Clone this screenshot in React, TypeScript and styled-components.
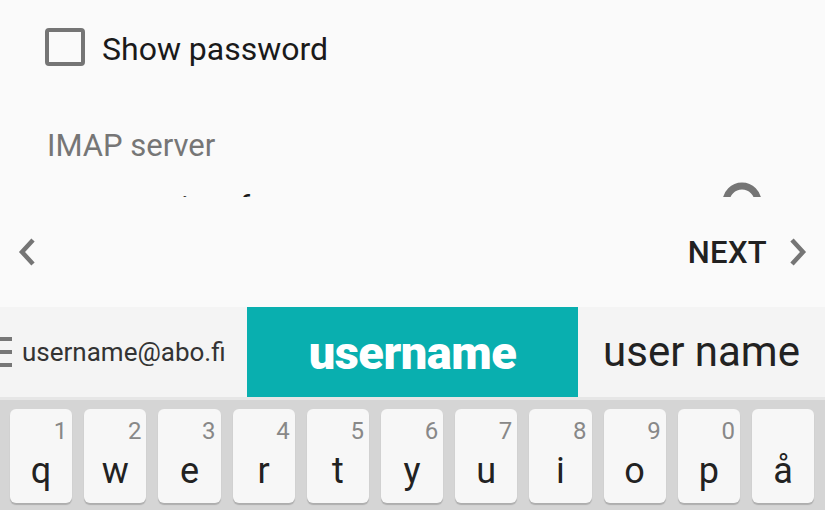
import React from 'react';
import styled, { createGlobalStyle } from 'styled-components';

const GlobalStyle = createGlobalStyle`
  html, body {
    margin: 0;
    padding: 0;
    background: #fafafa;
    font-family: Roboto, "Noto Sans", Arial, sans-serif;
  }
  * { box-sizing: border-box; }
`;

export const Screen = styled.div`
  width: 825px;
  height: 510px;
  overflow: hidden;
  display: flex;
  flex-direction: column;
  background: #fafafa;
`;

export const Form = styled.section`
  height: 197px;
  overflow: hidden;
  padding: 28px 0 0 45px;
  display: flex;
  flex-direction: column;
  flex-shrink: 0;
`;

export const CheckRow = styled.label`
  display: flex;
  align-items: center;
  gap: 17px;
  height: 39px;
`;

export const Box = styled.span`
  width: 40px;
  height: 38px;
  border: 4px solid #757575;
  border-radius: 4px;
`;

export const CheckText = styled.span`
  font-size: 32px;
  color: #1a1a1a;
  line-height: 1;
  margin-top: 4px;
`;

export const FieldLabel = styled.div`
  margin-top: 64px;
  margin-left: 2px;
  font-size: 31px;
  line-height: 1;
  color: #767676;
`;

export const FieldRow = styled.div`
  display: flex;
  align-items: flex-start;
  margin-top: 18px;
  margin-left: 2px;
  padding-right: 63px;
`;

export const FieldValue = styled.span`
  flex: 1;
  padding-top: 13px;
  font-size: 31px;
  line-height: 1;
  color: #1a1a1a;
`;

export const ClearIcon = styled.svg`
  margin-top: 3px;
`;

export const NavBar = styled.nav`
  height: 110px;
  flex-shrink: 0;
  display: flex;
  align-items: center;
  justify-content: space-between;
  padding: 0 18px 0 18px;
`;

export const NextButton = styled.span`
  display: flex;
  align-items: center;
  gap: 22px;
  font-size: 31px;
  font-weight: 500;
  color: #212121;
  letter-spacing: 0.3px;
`;

export const Strip = styled.div`
  height: 90px;
  flex-shrink: 0;
  display: flex;
  background: #f4f4f4;
`;

export const Suggestion = styled.div<{ $active?: boolean; $w: number }>`
  width: ${p => p.$w}px;
  display: flex;
  align-items: center;
  justify-content: center;
  background: ${p => (p.$active ? '#09afaf' : 'transparent')};
  color: ${p => (p.$active ? '#ffffff' : '#222')};
`;

export const LeftSuggestion = styled(Suggestion)`
  justify-content: flex-start;
  gap: 10px;
  font-size: 26px;
  color: #333;
`;

export const Bars = styled.span`
  width: 12px;
  height: 30px;
  display: flex;
  flex-direction: column;
  justify-content: space-between;
  & > i {
    display: block;
    height: 4px;
    background: #777;
  }
`;

export const BigWord = styled.span<{ $bold?: boolean }>`
  font-size: ${p => (p.$bold ? 47 : 42)}px;
  font-weight: ${p => (p.$bold ? 900 : 400)};
  letter-spacing: ${p => (p.$bold ? '-0.5px' : '0')};
  line-height: 1;
`;

export const Keyboard = styled.div`
  flex: 1;
  background: #d5d5d5;
  border-top: 3px solid #e6e6e6;
  padding: 9px 11px 0 10px;
  display: flex;
  gap: 12px;
`;

export const Key = styled.div`
  flex: 1;
  height: 94px;
  border-radius: 6px;
  background: #f7f7f7;
  box-shadow: 0 2px 1px rgba(0, 0, 0, 0.18);
  position: relative;
  display: flex;
  justify-content: center;
  padding-top: 44px;
  font-size: 36px;
  line-height: 1;
  color: #222;
`;

export const Digit = styled.span`
  position: absolute;
  top: 10px;
  right: 5px;
  font-size: 24px;
  line-height: 1;
  color: #888;
`;

const Chevron = ({ dir }: { dir: 'left' | 'right' }) => (
  <svg width="18" height="28" viewBox="0 0 18 28">
    <path
      d={dir === 'left' ? 'M15 2 L4 14 L15 26' : 'M3 2 L14 14 L3 26'}
      fill="none"
      stroke="#757575"
      strokeWidth="4.5"
    />
  </svg>
);

const keys: [string, string][] = [
  ['q', '1'], ['w', '2'], ['e', '3'], ['r', '4'], ['t', '5'], ['y', '6'],
  ['u', '7'], ['i', '8'], ['o', '9'], ['p', '0'], ['å', ''],
];

export default function App() {
  return (
    <>
      <GlobalStyle />
      <Screen>
        <Form>
          <CheckRow>
            <Box />
            <CheckText>Show password</CheckText>
          </CheckRow>
          <FieldLabel>IMAP server</FieldLabel>
          <FieldRow>
            <FieldValue>tuxserver.imx.fo</FieldValue>
            <ClearIcon width="40" height="40" viewBox="0 0 40 40">
              <circle cx="20" cy="20" r="16" fill="none" stroke="#757575" strokeWidth="7" />
            </ClearIcon>
          </FieldRow>
        </Form>
        <NavBar>
          <Chevron dir="left" />
          <NextButton>
            NEXT
            <Chevron dir="right" />
          </NextButton>
        </NavBar>
        <Strip>
          <LeftSuggestion $w={247}>
            <Bars><i /><i /><i /></Bars>
            username@abo.fi
          </LeftSuggestion>
          <Suggestion $active $w={331}>
            <BigWord $bold>username</BigWord>
          </Suggestion>
          <Suggestion $w={247}>
            <BigWord>user name</BigWord>
          </Suggestion>
        </Strip>
        <Keyboard>
          {keys.map(([l, d]) => (
            <Key key={l}>
              {d && <Digit>{d}</Digit>}
              {l}
            </Key>
          ))}
        </Keyboard>
      </Screen>
    </>
  );
}
